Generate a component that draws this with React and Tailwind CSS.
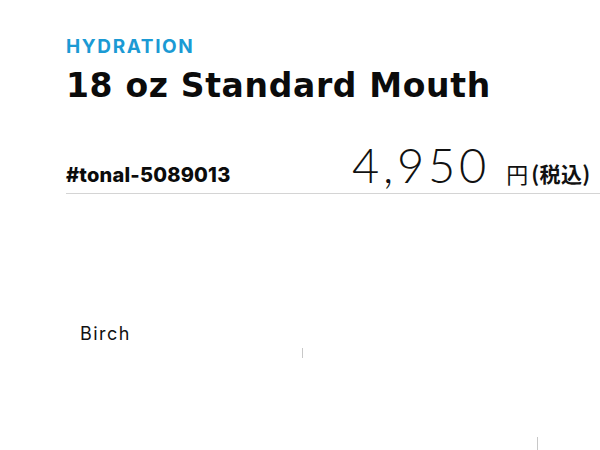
export default function App() {
  return (
    <div className="w-[600px] h-[450px] overflow-hidden bg-white relative" style={{ fontFamily: "Inter, 'Noto Sans', sans-serif" }}>
      <div className="pl-[66px] pt-[36px] w-[640px]">
        <p className="text-[19px] font-bold leading-[22px] text-[#1b9ad4] tracking-[0.085em]">HYDRATION</p>
        <h1 className="mt-[8px] text-[33px] font-extrabold leading-[40px] text-[#0b0b0b] tracking-[0.02em]" style={{ fontFamily: "'DejaVu Sans', sans-serif" }}>
          18 oz Standard Mouth
        </h1>
        <div className="mt-[35px] flex items-end border-b border-[#d4d4d4] pb-[4px]">
          <span className="w-[286px] text-[20px] font-extrabold leading-[24px] text-[#0b0b0b] tracking-[0.01em] pb-[2px]">#tonal-5089013</span>
          <span className="text-[47px] font-light leading-[48px] text-[#111] tracking-[0.08em]" style={{ fontFamily: "Lato, sans-serif" }}>4,950</span>
          <span className="ml-[16px] text-[22px] leading-[28px] text-[#111] pb-[2px]" style={{ fontFamily: "'Noto Sans CJK JP', sans-serif" }}>円</span>
          <span className="ml-[3px] text-[21px] font-bold leading-[28px] text-[#111] tracking-[0.02em] pb-[2px]" style={{ fontFamily: "'Noto Sans CJK JP', sans-serif" }}>(税込)</span>
        </div>
        <div className="h-[129px]" />
        <div className="flex">
          <span className="ml-[14px] text-[18px] leading-[22px] text-[#111] tracking-[0.08em]">Birch</span>
        </div>
        <div className="ml-[236px] mt-[3px] w-px h-[10px] bg-[#c8c8c8]" />
        <div className="ml-[471px] mt-[79px] w-px h-[14px] bg-[#c8c8c8]" />
      </div>
    </div>
  );
}
